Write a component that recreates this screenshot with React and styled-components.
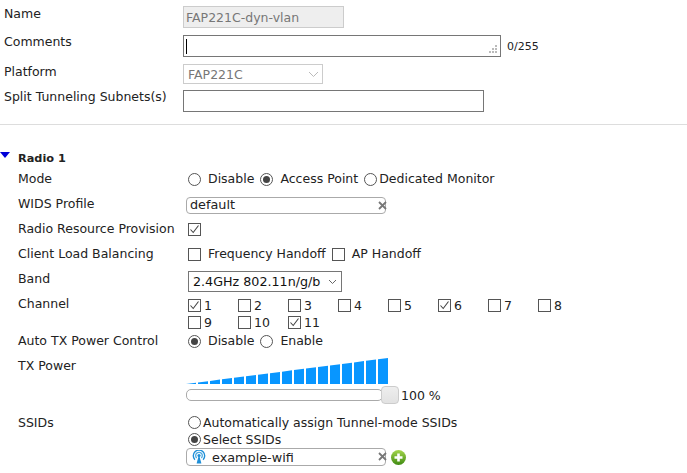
import styled, { createGlobalStyle } from 'styled-components'

const GlobalStyle = createGlobalStyle`
  html, body {
    margin: 0;
    padding: 0;
    background: #fff;
  }
  body {
    font-family: "DejaVu Sans", Tahoma, sans-serif;
    font-size: 12.5px;
    color: #222;
  }
`

const Page = styled.div`
  width: 687px;
  height: 473px;
  overflow: hidden;
`

const TopForm = styled.div`
  padding: 6px 0 0 4px;
  height: 118px;
  box-sizing: content-box;
  border-bottom: 1px solid #ddd;
`

const Row = styled.div`
  display: flex;
  align-items: flex-start;
  height: ${(p) => p.$h}px;
`

const TopLabel = styled.div`
  width: 179px;
  flex: none;
  line-height: 16px;
  margin-top: ${(p) => p.$mt || 0}px;
`

const Disabled = styled.div`
  width: 161px;
  height: 22px;
  box-sizing: border-box;
  padding-left: 2px;
  border: 1px solid #ccc;
  background: #eee;
  color: #777;
  line-height: 22px;
`

const TextBox = styled.div`
  position: relative;
  width: ${(p) => p.$w}px;
  height: 22px;
  box-sizing: border-box;
  border: 1px solid #767676;
  background: #fff;
`

const Caret = styled.div`
  width: 1px;
  height: 15px;
  margin: 3px 0 0 2px;
  background: #000;
`

const Grip = styled.svg`
  position: absolute;
  right: 2px;
  bottom: 2px;
`

const Count = styled.span`
  margin: 5px 0 0 6px;
  font-size: 11px;
  line-height: 14px;
`

const PlatformSelect = styled.div`
  display: flex;
  align-items: center;
  justify-content: space-between;
  width: 140px;
  height: 20px;
  box-sizing: border-box;
  padding: 0 3px 0 4px;
  border: 1px solid #ccc;
  color: #777;
`

const Section = styled.div`
  padding-top: 26px;
`

const Heading = styled.div`
  display: flex;
  height: 20px;
  font-weight: bold;
  font-size: 11.3px;
  line-height: 16px;
`

const Arrow = styled.div`
  width: 0;
  height: 0;
  margin: 1px 8px 0 0;
  border-left: 5.5px solid transparent;
  border-right: 5.5px solid transparent;
  border-top: 6px solid #0000d8;
`

const Field = styled.div`
  display: flex;
  align-items: flex-start;
  padding-left: 18px;
  height: ${(p) => p.$h}px;
`

const Label = styled.div`
  width: 170px;
  flex: none;
  line-height: 16px;
`

const Options = styled.div`
  display: flex;
  align-items: center;
  height: 16px;
  line-height: 16px;
`

const Radio = styled.span`
  display: flex;
  align-items: center;
  justify-content: center;
  flex: none;
  width: 13px;
  height: 13px;
  box-sizing: border-box;
  margin: ${(p) => p.$m || '0'};
  border: 1px solid #555;
  border-radius: 50%;
  &::after {
    content: '';
    display: ${(p) => (p.$on ? 'block' : 'none')};
    width: 7px;
    height: 7px;
    border-radius: 50%;
    background: #444;
  }
`

const Box = styled.span`
  display: block;
  flex: none;
  width: 13px;
  height: 13px;
  box-sizing: border-box;
  margin: ${(p) => p.$m || '0'};
  border: 1px solid #555;
  background: #fff;
`

const Tick = styled.svg`
  display: block;
`

const Check = ({ on, m }) => (
  <Box $m={m}>
    {on && (
      <Tick width="11" height="11" viewBox="0 0 11 11">
        <path d="M1.5 5.5 L4.2 8.5 L9.5 1.5" fill="none" stroke="#444" strokeWidth="1.1" />
      </Tick>
    )}
  </Box>
)

const Chip = styled.div`
  position: relative;
  display: flex;
  align-items: center;
  width: 200px;
  height: ${(p) => p.$h}px;
  box-sizing: border-box;
  margin: ${(p) => p.$mt}px 0 0 -2px;
  padding: 0 0 ${(p) => p.$pb || 0}px ${(p) => p.$pad}px;
  border: 1px solid #aaa;
  border-radius: 4px;
  background: #fff;
  font-size: 12.8px;
`

const Clear = styled.svg`
  position: absolute;
  right: -2px;
  top: 3px;
`

const ClearIcon = () => (
  <Clear width="9" height="9" viewBox="0 0 9 9">
    <path d="M1 1 L8 8 M8 1 L1 8" stroke="#777" strokeWidth="1.8" fill="none" />
  </Clear>
)

const Band = styled.div`
  display: flex;
  align-items: center;
  justify-content: space-between;
  width: 154px;
  height: 21px;
  box-sizing: border-box;
  padding: 0 4px;
  border: 1px solid #767676;
  color: #111;
  font-size: 12.7px;
`

const ChannelGrid = styled.div`
  display: grid;
  grid-template-columns: repeat(8, 50px);
  grid-auto-rows: 17px;
  margin-top: 1px;
`

const Channel = styled.div`
  display: flex;
  align-items: center;
  gap: 3px;
`

const Bars = styled.svg`
  display: block;
`

const SliderRow = styled.div`
  display: flex;
  align-items: center;
  margin-top: 2px;
`

const Track = styled.div`
  width: 197px;
  height: 12px;
  box-sizing: border-box;
  border: 1px solid #aaa;
  border-radius: 5px;
`

const Thumb = styled.div`
  flex: none;
  width: 18px;
  height: 18px;
  box-sizing: border-box;
  margin-left: -2px;
  border: 1px solid #ccc;
  border-radius: 4px;
  background: linear-gradient(#eee, #e2e2e2);
`

const Percent = styled.span`
  margin-left: 2px;
`

const Stack = styled.div`
  display: flex;
  flex-direction: column;
  margin: ${(p) => p.$m || '0'};
`

const StackRow = styled.div`
  display: flex;
  align-items: center;
  height: ${(p) => p.$h || 17}px;
  gap: 2px;
`

const ChipName = styled.span`
  margin-left: 6px;
`

const channels = [1, 2, 3, 4, 5, 6, 7, 8, 9, 10, 11]
const checked = [1, 6, 11]

// wedge of 17 bars, the tops follow one continuous slope
const barPoints = Array.from({ length: 17 }, (_, i) => {
  const x = i * 12
  const top = (px) => 26 - (px / 202) * 26
  return `${x},26 ${x},${top(x)} ${x + 10},${top(x + 10)} ${x + 10},26`
})

const WifiIcon = () => (
  <svg width="14" height="14" viewBox="0 0 14 14">
    <circle cx="7" cy="5.5" r="1.6" fill="#1e8fd8" />
    <path d="M6.6 6 L4.6 13.5 H9.4 L7.4 6 Z" fill="#1e8fd8" />
    <path d="M4.7 8 A3.3 3.3 0 1 1 9.3 8" stroke="#4aa8e0" strokeWidth="1.3" fill="none" />
    <path d="M2.9 9.8 A5.7 5.7 0 1 1 11.1 9.8" stroke="#1e8fd8" strokeWidth="1.4" fill="none" />
  </svg>
)

const AddIcon = () => (
  <svg width="15" height="15" viewBox="0 0 15 15" style={{ marginLeft: 3 }}>
    <defs>
      <linearGradient id="add" x1="0" y1="0" x2="0" y2="1">
        <stop offset="0" stopColor="#a5d64c" />
        <stop offset="1" stopColor="#3f8a12" />
      </linearGradient>
    </defs>
    <circle cx="7.5" cy="7.5" r="7.5" fill="url(#add)" />
    <path d="M7.5 3.5 V11.5 M3.5 7.5 H11.5" stroke="#fff" strokeWidth="2.6" />
  </svg>
)

export default function App() {
  return (
    <Page>
      <GlobalStyle />
      <TopForm>
        <Row $h={29}>
          <TopLabel>Name</TopLabel>
          <Disabled>FAP221C-dyn-vlan</Disabled>
        </Row>
        <Row $h={29}>
          <TopLabel $mt={-1}>Comments</TopLabel>
          <TextBox $w={318}>
            <Caret />
            <Grip width="9" height="9" viewBox="0 0 9 9">
              <path d="M6 0h2v2H6zM3 3h2v2H3zM6 3h2v2H6zM0 6h2v2H0zM3 6h2v2H3zM6 6h2v2H6z" fill="#bbb" />
            </Grip>
          </TextBox>
          <Count>0/255</Count>
        </Row>
        <Row $h={26}>
          <TopLabel>Platform</TopLabel>
          <PlatformSelect>
            FAP221C
            <svg width="11" height="7" viewBox="0 0 11 7">
              <path d="M1 1 L5.5 5.5 L10 1" fill="none" stroke="#bbb" />
            </svg>
          </PlatformSelect>
        </Row>
        <Row $h={28}>
          <TopLabel $mt={-1}>Split Tunneling Subnets(s)</TopLabel>
          <TextBox $w={301} />
        </Row>
      </TopForm>
      <Section>
        <Heading>
          <Arrow />
          Radio 1
        </Heading>
        <Field $h={25}>
          <Label>Mode</Label>
          <Options>
            <Radio $m="0 7px 0 0" />Disable
            <Radio $on $m="0 7px 0 6px" />Access Point
            <Radio $m="0 2px 0 6px" />Dedicated Monitor
          </Options>
        </Field>
        <Field $h={25}>
          <Label>WIDS Profile</Label>
          <Chip $h={17} $mt={1} $pad={3} $pb={2}>default<ClearIcon /></Chip>
        </Field>
        <Field $h={25}>
          <Label>Radio Resource Provision</Label>
          <Options><Check on /></Options>
        </Field>
        <Field $h={25}>
          <Label>Client Load Balancing</Label>
          <Options>
            <Check m="0 7px 0 0" />Frequency Handoff
            <Check m="0 7px 0 6px" />AP Handoff
          </Options>
        </Field>
        <Field $h={25}>
          <Label>Band</Label>
          <Band>
            2.4GHz 802.11n/g/b
            <svg width="9" height="6" viewBox="0 0 9 6">
              <path d="M1 1 L4.5 4.5 L8 1" fill="none" stroke="#666" />
            </svg>
          </Band>
        </Field>
        <Field $h={37}>
          <Label>Channel</Label>
          <ChannelGrid>
            {channels.map((n) => (
              <Channel key={n}>
                <Check on={checked.includes(n)} />
                {n}
              </Channel>
            ))}
          </ChannelGrid>
        </Field>
        <Field $h={25}>
          <Label>Auto TX Power Control</Label>
          <Options>
            <Radio $on $m="0 7px 0 0" />Disable
            <Radio $m="0 7px 0 6px" />Enable
          </Options>
        </Field>
        <Field $h={57}>
          <Label>TX Power</Label>
          <Stack $m="0 0 0 -2px">
            <Bars width="202" height="26" viewBox="0 0 202 26">
              {barPoints.map((pts) => (
                <polygon key={pts} points={pts} fill="#0896ff" />
              ))}
            </Bars>
            <SliderRow>
              <Track />
              <Thumb />
              <Percent>100 %</Percent>
            </SliderRow>
          </Stack>
        </Field>
        <Field $h={50}>
          <Label>SSIDs</Label>
          <Stack $m="-1px 0 0 0">
            <StackRow><Radio />Automatically assign Tunnel-mode SSIDs</StackRow>
            <StackRow><Radio $on />Select SSIDs</StackRow>
            <StackRow $h={18}>
              <Chip $h={18} $mt={0} $pad={5}>
                <WifiIcon />
                <ChipName>example-wifi</ChipName>
                <ClearIcon />
              </Chip>
              <AddIcon />
            </StackRow>
          </Stack>
        </Field>
      </Section>
    </Page>
  )
}
